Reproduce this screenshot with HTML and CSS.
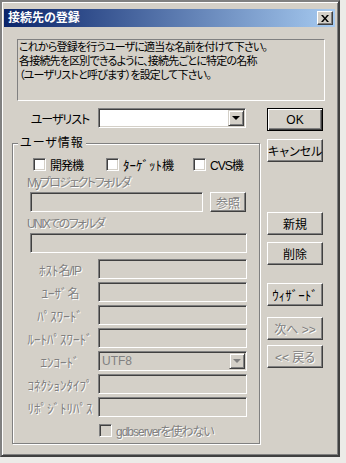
FILE: index.html
```html
<!DOCTYPE html>
<html lang="ja">
<head>
    <meta charset="UTF-8">
    <title>接続先の登録</title>
    <link rel="stylesheet" href="styles.css">
</head>
<body>

<div class="window">
    <div class="titlebar">
        <span class="title">接続先の登録</span>
        <span class="close-btn">
            <svg width="8" height="7" viewBox="0 0 8 7"><path d="M0 0h2l2 2.4L6 0h2L5 3.5 8 7H6L4 4.6 2 7H0l3-3.5z" fill="#000"/></svg>
        </span>
    </div>

    <div class="content">
        <div class="desc">これから登録を行うユーザに適当な名前を付けて下さい。<br>各接続先を区別できるように、接続先ごとに特定の名称<br>（ユーザリストと呼びます）を設定して下さい。</div>

        <div class="main">
            <div class="left">
                <div class="list-row">
                    <span class="row-label">ユーザリスト</span>
                    <div class="combo combo-user">
                        <span class="combo-text"></span>
                        <span class="drop-btn"><i class="arrow"></i></span>
                    </div>
                </div>

                <fieldset class="group">
                    <legend>ユーザ情報</legend>
                    <div class="checks">
                        <label class="check check-dev"><span class="box"></span>開発機</label>
                        <label class="check check-target"><span class="box"></span><span class="hk">ﾀｰｹﾞｯﾄ</span>機</label>
                        <label class="check"><span class="box"></span>CVS機</label>
                    </div>

                    <div class="caption disabled">Myプロジェクトフォルダ</div>
                    <div class="folder-row">
                        <div class="field field-project"></div>
                        <button class="btn btn-browse disabled">参照</button>
                    </div>

                    <div class="caption disabled">UNIXでのフォルダ</div>
                    <div class="field field-unix"></div>

                    <div class="form">
                        <div class="form-row"><span class="row-label disabled"><span class="hk">ﾎｽﾄ</span>名/IP</span><div class="field"></div></div>
                        <div class="form-row"><span class="row-label disabled"><span class="hk">ﾕｰｻﾞ</span>名</span><div class="field"></div></div>
                        <div class="form-row"><span class="row-label disabled hk">ﾊﾟｽﾜｰﾄﾞ</span><div class="field"></div></div>
                        <div class="form-row"><span class="row-label disabled hk">ﾙｰﾄﾊﾟｽﾜｰﾄﾞ</span><div class="field"></div></div>
                        <div class="form-row">
                            <span class="row-label disabled hk">ｴﾝｺｰﾄﾞ</span>
                            <div class="combo combo-encode">
                                <span class="combo-text">UTF8</span>
                                <span class="drop-btn"><i class="arrow arrow-off"></i></span>
                            </div>
                        </div>
                        <div class="form-row"><span class="row-label disabled hk">ｺﾈｸｼｮﾝﾀｲﾌﾟ</span><div class="field"></div></div>
                        <div class="form-row"><span class="row-label disabled hk">ﾘﾎﾟｼﾞﾄﾘﾊﾟｽ</span><div class="field"></div></div>
                    </div>

                    <label class="check check-gdb disabled"><span class="box box-off"></span>gdbserverを使わない</label>
                </fieldset>
            </div>

            <div class="buttons">
                <button class="btn btn-default">OK</button>
                <button class="btn btn-cancel">キャンセル</button>
                <button class="btn btn-new">新規</button>
                <button class="btn btn-delete">削除</button>
                <button class="btn btn-wizard hk">ｳｨｻﾞｰﾄﾞ</button>
                <button class="btn btn-next disabled">次へ &gt;&gt;</button>
                <button class="btn btn-back disabled">&lt;&lt; 戻る</button>
            </div>
        </div>
    </div>
</div>

</body>
</html>
```

FILE: styles.css
```css
* {
    box-sizing: border-box;
}
body {
    margin: 0;
    background: #ecebe8;
    font-family: "Liberation Sans", "Noto Sans CJK JP", sans-serif;
    font-size: 12px;
    font-feature-settings: "palt";
    letter-spacing: -1px;
    color: #000;
}
/* half-width kana: keep them at their fixed width */
.hk {
    font-size: 13px;
    font-feature-settings: normal;
    letter-spacing: 0;
}

.window {
    width: 340px;
    height: 457px;
    padding: 7px 3px 0 2px;
    background: #d4d0c8;
    border: 2px solid;
    border-color: #808080 #404040 #404040 #808080;
    box-shadow: inset 1px 1px #fff, inset -1px -1px #808080;
}

/* title bar */
.titlebar {
    display: flex;
    align-items: center;
    justify-content: space-between;
    height: 18px;
    padding: 0 2px 0 4px;
    background: linear-gradient(90deg, #0a246a, #a6caf0);
}
.title {
    color: #fff;
    font-weight: bold;
    line-height: 18px;
    letter-spacing: 0;
}
.close-btn {
    display: flex;
    align-items: center;
    justify-content: center;
    width: 16px;
    height: 14px;
    background: #d4d0c8;
    border: 1px solid;
    border-color: #fff #404040 #404040 #fff;
    box-shadow: inset -1px -1px #808080;
}

.content {
    padding: 12px 10px 0 8px;
}
.desc {
    width: 308px;
    height: 62px;
    margin-left: 5px;
    padding-left: 1px;
    font-size: 11px;
    line-height: 14px;
    letter-spacing: -0.8px;
    border: 1px solid;
    border-color: #808080 #fff #fff #808080;
}

.main {
    display: flex;
    margin-top: 7px;
}
.left {
    width: 248px;
}

/* sunken controls */
.combo, .field, .box {
    border: 1px solid;
    border-color: #808080 #fff #fff #808080;
    box-shadow: inset 1px 1px #404040, inset -1px -1px #d4d0c8;
}

.list-row {
    display: flex;
    align-items: center;
    height: 20px;
    padding-left: 15px;
}
.row-label {
    width: 66px;
    margin-right: 5px;
    text-align: center;
    white-space: nowrap;
}
.combo {
    display: flex;
    align-items: center;
    height: 20px;
    padding: 1px;
}
.combo-user {
    width: 148px;
    background: #fff;
}
.combo-encode {
    width: 149px;
    background: #d4d0c8;
}
.combo-text {
    flex: 1;
    padding-left: 2px;
    color: #808080;
    letter-spacing: 0;
}
.drop-btn {
    display: flex;
    align-items: center;
    justify-content: center;
    width: 16px;
    height: 16px;
    background: #d4d0c8;
    border: 1px solid;
    border-color: #d4d0c8 #404040 #404040 #d4d0c8;
    box-shadow: inset 1px 1px #fff, inset -1px -1px #808080;
}
.arrow {
    width: 0;
    height: 0;
    border-left: 4px solid transparent;
    border-right: 4px solid transparent;
    border-top: 4px solid #000;
}
.arrow-off {
    border-top-color: #808080;
}

/* group box */
.group {
    margin: 8px 0 0;
    padding: 0 11px 6px 14px;
    min-width: 0;
    border: 1px solid #808080;
    box-shadow: inset 1px 1px #fff, 1px 1px #fff;
}
.group legend {
    margin-left: -9px;
    padding: 0 2px;
    line-height: 14px;
    letter-spacing: 1px;
    background: #d4d0c8;
}

.checks {
    display: flex;
    align-items: center;
    height: 14px;
    margin-top: 7px;
    padding-left: 6px;
}
.check {
    display: flex;
    align-items: center;
    height: 14px;
    white-space: nowrap;
}
.check-dev {
    width: 73px;
}
.check-target {
    width: 87px;
}
.box {
    width: 13px;
    height: 13px;
    margin-right: 4px;
    background: #fff;
}
.box-off {
    background: #d4d0c8;
}

.disabled {
    color: #808080;
    text-shadow: 1px 1px 0 #fff;
}
.caption {
    margin-top: 5px;
    line-height: 14px;
    letter-spacing: -1.6px;
}
.folder-row {
    display: flex;
    margin: 2px 0 0 3px;
}
.field {
    height: 20px;
    background: #d4d0c8;
}
.field-project {
    width: 173px;
}
.field-unix {
    width: 217px;
    margin: 2px 0 0 3px;
}

.form {
    display: flex;
    flex-direction: column;
    gap: 3px;
    margin-top: 6px;
}
.form-row {
    display: flex;
    align-items: center;
}
.form-row .field {
    width: 149px;
}
.check-gdb {
    margin-top: 6px;
    padding-left: 72px;
}

/* buttons */
.btn {
    display: block;
    width: 56px;
    height: 23px;
    padding: 0;
    font: inherit;
    white-space: nowrap;
    color: #000;
    background: #d4d0c8;
    border: 1px solid;
    border-color: #fff #404040 #404040 #fff;
    box-shadow: inset -1px -1px #808080;
}
.btn.hk {
    font-size: 13px;
}
.btn.disabled {
    color: #808080;
}
.btn-default {
    letter-spacing: 0;
    border-color: #000;
    box-shadow: inset 1px 1px #fff, inset -1px -1px #404040, inset -2px -2px #808080;
}
.btn-browse {
    width: 36px;
    height: 20px;
    margin-left: 7px;
}
.buttons {
    display: flex;
    flex-direction: column;
    width: 56px;
    margin-left: 7px;
}
.btn-cancel {
    margin-top: 8px;
}
.btn-new {
    margin-top: 50px;
}
.btn-delete {
    margin-top: 7px;
}
.btn-wizard {
    margin-top: 18px;
}
.btn-next {
    margin-top: 11px;
    letter-spacing: 0;
}
.btn-back {
    margin-top: 5px;
    letter-spacing: 0;
}
```
